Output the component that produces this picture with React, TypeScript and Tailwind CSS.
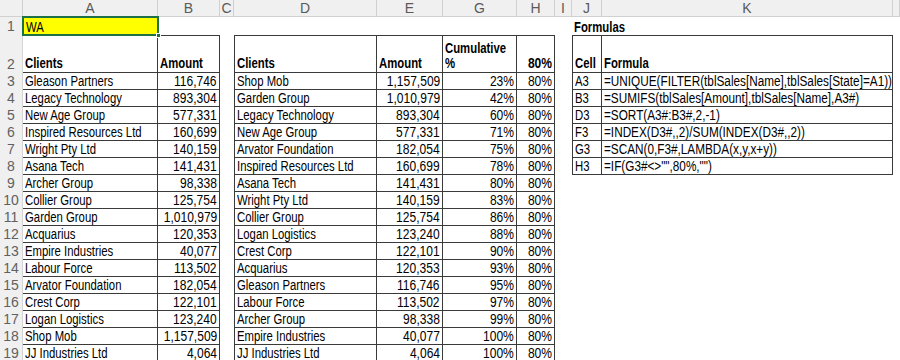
import React from "react";

const FONT = { fontFamily: '"Liberation Sans",Arial,sans-serif' };

const left: [string, string][] = [
  ["Gleason Partners", "116,746"],
  ["Legacy Technology", "893,304"],
  ["New Age Group", "577,331"],
  ["Inspired Resources Ltd", "160,699"],
  ["Wright Pty Ltd", "140,159"],
  ["Asana Tech", "141,431"],
  ["Archer Group", "98,338"],
  ["Collier Group", "125,754"],
  ["Garden Group", "1,010,979"],
  ["Acquarius", "120,353"],
  ["Empire Industries", "40,077"],
  ["Labour Force", "113,502"],
  ["Arvator Foundation", "182,054"],
  ["Crest Corp", "122,101"],
  ["Logan Logistics", "123,240"],
  ["Shop Mob", "1,157,509"],
  ["JJ Industries Ltd", "4,064"],
];

const sorted: [string, string, string][] = [
  ["Shop Mob", "1,157,509", "23%"],
  ["Garden Group", "1,010,979", "42%"],
  ["Legacy Technology", "893,304", "60%"],
  ["New Age Group", "577,331", "71%"],
  ["Arvator Foundation", "182,054", "75%"],
  ["Inspired Resources Ltd", "160,699", "78%"],
  ["Asana Tech", "141,431", "80%"],
  ["Wright Pty Ltd", "140,159", "83%"],
  ["Collier Group", "125,754", "86%"],
  ["Logan Logistics", "123,240", "88%"],
  ["Crest Corp", "122,101", "90%"],
  ["Acquarius", "120,353", "93%"],
  ["Gleason Partners", "116,746", "95%"],
  ["Labour Force", "113,502", "97%"],
  ["Archer Group", "98,338", "99%"],
  ["Empire Industries", "40,077", "100%"],
  ["JJ Industries Ltd", "4,064", "100%"],
];

const formulas: [string, string][] = [
  ["A3", "=UNIQUE(FILTER(tblSales[Name],tblSales[State]=A1))"],
  ["B3", "=SUMIFS(tblSales[Amount],tblSales[Name],A3#)"],
  ["D3", "=SORT(A3#:B3#,2,-1)"],
  ["F3", "=INDEX(D3#,,2)/SUM(INDEX(D3#,,2))"],
  ["G3", "=SCAN(0,F3#,LAMBDA(x,y,x+y))"],
  ["H3", '=IF(G3#<>"",80%,"")'],
];

const letters = ["", "A", "B", "C", "D", "E", "G", "H", "I", "J", "K", ""];

type CellProps = {
  text?: string;
  right?: boolean;
  bold?: boolean;
  table?: boolean;
  top?: boolean;
  edge?: boolean;
  code?: boolean;
};

// narrow text, close to Excel's Aptos Narrow
function Narrow({ text, right, code }: { text: string; right?: boolean; code?: boolean }) {
  const cls = right
    ? "inline-block origin-right scale-x-[0.86]"
    : code
      ? "inline-block origin-left scale-x-[0.84]"
      : "inline-block origin-left scale-x-[0.81]";
  return <span className={cls}>{text}</span>;
}

function Cell({ text, right, bold, table, top, edge, code }: CellProps) {
  return (
    <div
      className={[
        "flex items-end whitespace-nowrap px-[2px] text-[14px] leading-[15px] text-black",
        right ? "justify-end" : "justify-start",
        bold ? "font-bold" : "",
        top ? "pb-[1px]" : "",
        table ? "border-b border-r border-[#3a3a3a]" : "",
        table && top ? "border-t" : "",
        table && edge ? "border-l" : "",
      ].join(" ")}
    >
      {text ? <Narrow text={text} right={right} code={code} /> : null}
    </div>
  );
}

function RowHead({ n }: { n: number }) {
  return (
    <div className="flex items-end justify-center border-r border-[#d4d4d4] bg-[#f0f0f0] pb-[1px] text-[14px] leading-[15px] text-[#616161]">
      {n}
    </div>
  );
}

export default function App() {
  return (
    <div className="h-[360px] w-[900px] overflow-hidden bg-white" style={FONT}>
      <div className="grid grid-cols-[23px_135px_62px_14px_143px_66px_74px_38px_17px_30px_291px_1fr] grid-rows-[17px_18px_38px_repeat(17,17px)]">
        {letters.map((l, i) => (
          <div
            key={"h" + i}
            className="flex items-center justify-center border-b border-r border-[#d0d0d0] bg-[#f0f0f0] text-[14px] leading-[16px] text-[#5a5a5a]"
          >
            {l}
          </div>
        ))}

        {/* row 1 */}
        <RowHead n={1} />
        <div className="relative flex items-end bg-[#ffff00] px-[3px] text-[14px] leading-[15px]">
          <Narrow text="WA" />
          <div className="absolute -inset-[1px] border-2 border-[#1e7145]" />
          <div className="absolute -bottom-[3px] -right-[3px] h-[5px] w-[5px] border border-white bg-[#1e7145]" />
        </div>
        <Cell />
        <Cell />
        <Cell />
        <Cell />
        <Cell />
        <Cell />
        <Cell />
        <Cell text="Formulas" bold />
        <Cell />
        <Cell />

        {/* row 2 */}
        <RowHead n={2} />
        <Cell text="Clients" bold table top />
        <Cell text="Amount" bold table top />
        <Cell />
        <Cell text="Clients" bold table top edge />
        <Cell text="Amount" bold table top />
        <div className="flex flex-col items-start justify-end whitespace-nowrap border-b border-r border-t border-[#3a3a3a] px-[2px] pb-[1px] text-[14px] font-bold leading-[15px]">
          <Narrow text="Cumulative" />
          <Narrow text="%" />
        </div>
        <Cell text="80%" bold right table top />
        <Cell />
        <Cell text="Cell" bold table top edge />
        <Cell text="Formula" bold table top />
        <Cell />

        {left.map((row, i) => {
          const s = sorted[i];
          const f = formulas[i];
          return (
            <React.Fragment key={i}>
              <RowHead n={i + 3} />
              <Cell text={row[0]} table />
              <Cell text={row[1]} right table />
              <Cell />
              <Cell text={s[0]} table edge />
              <Cell text={s[1]} right table />
              <Cell text={s[2]} right table />
              <Cell text="80%" right table />
              <Cell />
              {f ? <Cell text={f[0]} table edge /> : <Cell />}
              {f ? <Cell text={f[1]} table code /> : <Cell />}
              <Cell />
            </React.Fragment>
          );
        })}
      </div>
    </div>
  );
}
